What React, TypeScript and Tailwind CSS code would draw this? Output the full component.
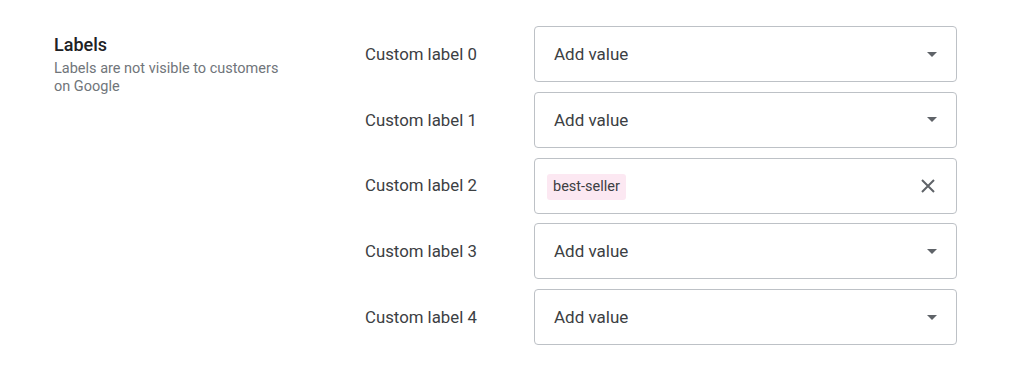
const rows = [
  { label: "Custom label 0", tag: null },
  { label: "Custom label 1", tag: null },
  { label: "Custom label 2", tag: "best-seller" },
  { label: "Custom label 3", tag: null },
  { label: "Custom label 4", tag: null },
];

function Arrow() {
  return (
    <svg width="10" height="5" viewBox="0 0 10 5" className="text-[#5f6368]">
      <path d="M0 0h10L5 5z" fill="currentColor" />
    </svg>
  );
}

function Close() {
  return (
    <svg width="14" height="14" viewBox="0 0 14 14" className="text-[#5f6368]">
      <path d="M1 1l12 12M13 1L1 13" stroke="currentColor" strokeWidth="2" />
    </svg>
  );
}

export default function App() {
  return (
    <div className="w-[1024px] h-[368px] bg-white flex font-['Roboto',sans-serif]">
      <div className="w-[365px] shrink-0 pl-[54px] pt-[32px] flex flex-col">
        <h2 className="text-[18px] leading-[26px] font-medium text-[#202124]">
          Labels
        </h2>
        <p className="mt-[2px] text-[14.5px] leading-[18px] text-[#70757a] w-[240px]">
          Labels are not visible to customers on Google
        </p>
      </div>
      <div className="pt-[26px] flex flex-col gap-[9.75px]">
        {rows.map((r) => (
          <div key={r.label} className="flex items-center h-[56px]">
            <div className="w-[169px] pt-[1px] text-[16.8px] text-[#3c4043]">{r.label}</div>
            <div className="w-[423px] h-full border border-[#bdc1c6] rounded-[4px] flex items-center justify-between">
              {r.tag ? (
                <>
                  <span className="ml-[12px] mt-[2px] h-[26px] px-[6px] flex items-center rounded-[3px] bg-[#fce8f2] text-[14.5px] text-[#3c4043]">
                    {r.tag}
                  </span>
                  <span className="mr-[21px] flex">
                    <Close />
                  </span>
                </>
              ) : (
                <>
                  <span className="ml-[19px] pt-[1px] text-[17px] text-[#3c4043]">Add value</span>
                  <span className="mr-[19px] flex">
                    <Arrow />
                  </span>
                </>
              )}
            </div>
          </div>
        ))}
      </div>
    </div>
  );
}
